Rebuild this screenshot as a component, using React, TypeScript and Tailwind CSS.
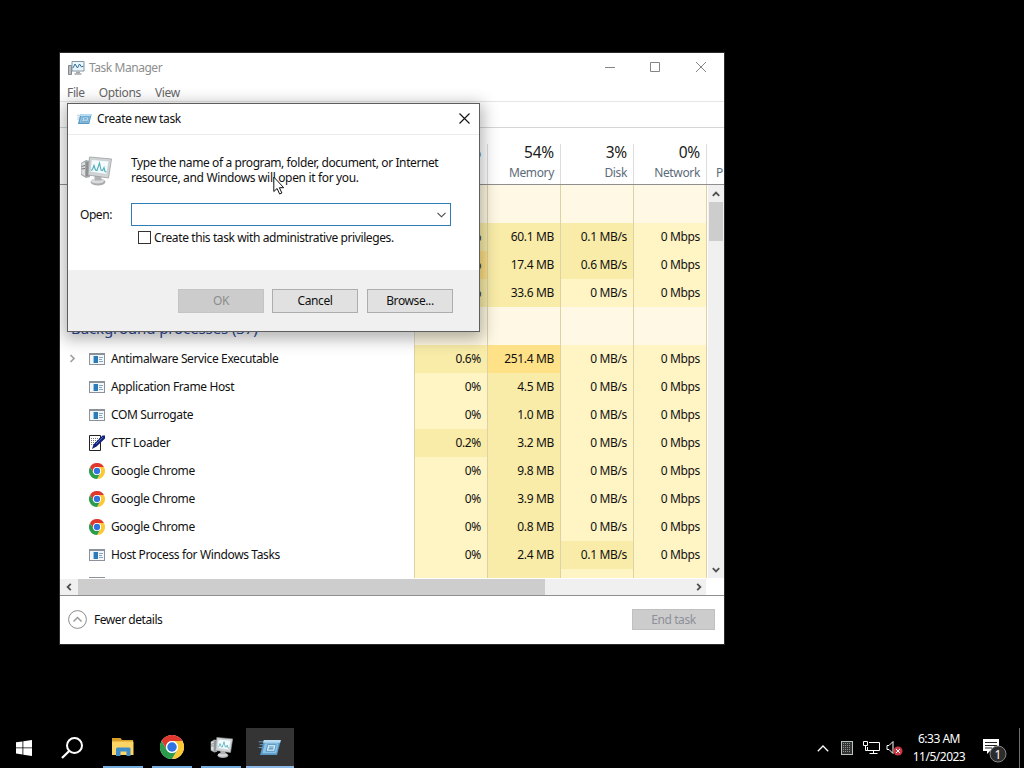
import type { ReactNode } from "react";

type Heat = "base" | "warm" | "hot" | "group";

type Row = {
  name?: string;
  icon?: "app" | "ctf" | "chrome";
  expandable?: boolean;
  cpu: [string, Heat];
  memory: [string, Heat];
  disk: [string, Heat];
};

const heatColors: Record<Heat, string> = {
  group: "bg-[#fff8e4]",
  base: "bg-[#fff4c4]",
  warm: "bg-[#f9eca8]",
  hot: "bg-[#ffe187]"
};

const apps: Row[] = [
  { cpu: ["%", "warm"], memory: ["60.1 MB", "warm"], disk: ["0.1 MB/s", "warm"] },
  { cpu: ["%", "hot"], memory: ["17.4 MB", "warm"], disk: ["0.6 MB/s", "warm"] },
  { cpu: ["%", "warm"], memory: ["33.6 MB", "warm"], disk: ["0 MB/s", "base"] }
];

const background: Row[] = [
  { name: "Antimalware Service Executable", icon: "app", expandable: true, cpu: ["0.6%", "warm"], memory: ["251.4 MB", "hot"], disk: ["0 MB/s", "base"] },
  { name: "Application Frame Host", icon: "app", cpu: ["0%", "base"], memory: ["4.5 MB", "warm"], disk: ["0 MB/s", "base"] },
  { name: "COM Surrogate", icon: "app", cpu: ["0%", "base"], memory: ["1.0 MB", "warm"], disk: ["0 MB/s", "base"] },
  { name: "CTF Loader", icon: "ctf", cpu: ["0.2%", "warm"], memory: ["3.2 MB", "warm"], disk: ["0 MB/s", "base"] },
  { name: "Google Chrome", icon: "chrome", cpu: ["0%", "base"], memory: ["9.8 MB", "warm"], disk: ["0 MB/s", "base"] },
  { name: "Google Chrome", icon: "chrome", cpu: ["0%", "base"], memory: ["3.9 MB", "warm"], disk: ["0 MB/s", "base"] },
  { name: "Google Chrome", icon: "chrome", cpu: ["0%", "base"], memory: ["0.8 MB", "warm"], disk: ["0 MB/s", "base"] },
  { name: "Host Process for Windows Tasks", icon: "app", cpu: ["0%", "base"], memory: ["2.4 MB", "warm"], disk: ["0.1 MB/s", "warm"] }
];

const columns = [
  { name: "", value: "%" },
  { name: "Memory", value: "54%" },
  { name: "Disk", value: "3%" },
  { name: "Network", value: "0%" }
];

const AppIcon = () => (
  <svg width="16" height="16" viewBox="0 0 16 16" shapeRendering="crispEdges">
    <rect x="0.5" y="2.5" width="15" height="11" fill="#f4f7f9" stroke="#8b9299" />
    <rect x="0" y="2" width="16" height="2" fill="#8b9299" />
    <rect x="5" y="5" width="4" height="7" fill="#2a7ab8" />
    <rect x="4" y="5" width="1" height="7" fill="#9cc8e6" />
    <path d="M10 6.5h4M10 8.5h3M10 10.5h4" stroke="#8aa5bd" />
  </svg>
);

const CtfIcon = () => (
  <svg width="16" height="16" viewBox="0 0 16 16">
    <path d="M.5.5h11v15H.5z" fill="#fff" stroke="#222" />
    <path d="M2 3.500h9M2 5.500h7M2 7.500h6M2 9.500h4" stroke="#777" strokeDasharray="1 1" />
    <path d="M13.500 .5h2.500v3L7.500 11.500 3 14l1.500-4.500z" fill="#12207e" />
    <path d="M14 2 7 9" stroke="#5c78c8" strokeWidth=".8" />
  </svg>
);

const ChromeIcon = ({ size = 16 }: { size?: number }) => (
  <svg width={size} height={size} viewBox="0 0 48 48">
    <circle cx="24" cy="24" r="24" fill="#fff" />
    <path d="M3.2 12A24 24 0 0 1 44.8 12H24A12 12 0 0 0 13.6 30z" fill="#e0382c" />
    <path d="M44.8 12A24 24 0 0 1 24 48L34.4 30A12 12 0 0 0 24 12z" fill="#fcc934" />
    <path d="M24 48A24 24 0 0 1 3.2 12L13.6 30A12 12 0 0 0 34.4 30z" fill="#2a9c4c" />
    <circle cx="24" cy="24" r="12" fill="#fff" />
    <circle cx="24" cy="24" r="9.5" fill="#2f74e0" />
  </svg>
);

const MonitorIcon = ({ size = 32 }: { size?: number }) => (
  <svg width={size} height={size} viewBox="0 0 32 32">
    <path d="M1 8l5-3 4 1v16l-4 1-5-3z" fill="#a4a7a9" />
    <path d="M1.500 8.500L5 7v14l-3.500-2z" fill="#dcdddd" />
    <path d="M1.500 11.500L5 10.500M1.500 14L5 13.500M7 7v14" stroke="#74787b" />
    <ellipse cx="18" cy="27" rx="7.500" ry="3.500" fill="#a9acae" />
    <ellipse cx="17.500" cy="26" rx="6.500" ry="2.500" fill="#d9dbdc" />
    <path d="M14.500 20h7v5.500h-7z" fill="#b0b3b5" />
    <path d="M9.500 2L31.500 4l-3 19L8 20z" fill="#d2d4d5" stroke="#9a9d9f" strokeWidth=".8" />
    <path d="M11.500 4.500L29 6l-2.300 13.500L10 17z" fill="#f5fbfc" stroke="#b5c6cb" strokeWidth=".6" />
    <path d="M11 15.500l1.500-1 1.500-4 1.500 4.500 1.500.5 2.500-7.500 1.500 7 1.500.500 1.500-3 1 4 1.500.5" fill="none" stroke="#4eaebc" strokeWidth="1.100" />
  </svg>
);

const SmallMonitorIcon = () => (
  <svg width="17" height="16" viewBox="0 0 17 16">
    <path d="M.5 5.500h3v9h-3z" fill="#b9bdc0" stroke="#85898c" />
    <path d="M4 1.500h12v9.500H4z" fill="#e9f6fc" stroke="#8296a6" />
    <path d="M5 8l2-4 2.500 4 2-4 2 3 2-1" fill="none" stroke="#31709c" />
    <path d="M8 11.500h4v2H8z" fill="#a5a9ac" />
    <path d="M6.500 14h7" stroke="#a5a9ac" strokeWidth="1.500" />
  </svg>
);

const RunIcon = ({ width = 15, height = 12 }: { width?: number; height?: number }) => (
  <svg width={width} height={height} viewBox="0 0 24 18">
    <path d="M0 3h9M1 6h7M0 9h6" stroke="#75a9cf" strokeWidth=".9" />
    <path d="M5.500 1H23.500L19.500 17H1.500z" fill="#5597c5" />
    <path d="M5.500 1H23.500L22.700 4H4.700z" fill="#b7dcf1" />
    <path d="M6.500 4.500h14.500L18.500 15H4z" fill="#8cc3e5" />
    <path d="M9.500 6h9l-1.700 7H8z" fill="#d9effa" stroke="#3e82b2" strokeWidth=".8" />
    <path d="M11 8.500h5M10.500 10.500h5" stroke="#4489b8" strokeWidth="1.200" />
  </svg>
);

const icons = {
  app: <AppIcon />,
  ctf: <CtfIcon />,
  chrome: <ChromeIcon />
};

const Cell = ({ children, heat }: { children?: ReactNode; heat: Heat }) => (
  <div className={`w-[73px] shrink-0 border-r border-[#ddd2a6] pr-[6px] text-right leading-[27px] tracking-[-0.35px] ${heatColors[heat]}`}>
    {children}
  </div>
);

const GroupRow = ({ title }: { title?: string }) => (
  <div className="flex h-[38px] shrink-0">
    <div className="w-[355px] shrink-0 border-r border-[#e3dcc0] pl-[11px] pt-[11px] text-[15px] leading-5 tracking-[-0.1px] text-[#264a9c]">{title}</div>
    {columns.map((_, idx) => (
      <Cell key={idx} heat="group" />
    ))}
  </div>
);

const ProcessRow = ({ row }: { row: Row }) => (
  <div className="flex h-7 shrink-0">
    <div className="flex w-[355px] shrink-0 items-center border-r border-[#ddd2a6] pl-[9px]">
      <svg width="7" height="10" viewBox="0 0 7 10" className="mr-[13px]">
        {row.expandable && <path d="M1.500 1L5 4.500 1.500 8" fill="none" stroke="#a0a0a0" strokeWidth="1.700" />}
      </svg>
      {row.icon && icons[row.icon]}
      <span className="ml-[6px] h-7 leading-[27px] tracking-[-0.37px]">{row.name}</span>
    </div>
    <Cell heat={row.cpu[1]}>{row.cpu[0]}</Cell>
    <Cell heat={row.memory[1]}>{row.memory[0]}</Cell>
    <Cell heat={row.disk[1]}>{row.disk[0]}</Cell>
    <Cell heat="base">0 Mbps</Cell>
  </div>
);

const Arrow = ({ className }: { className?: string }) => (
  <svg width="8" height="6" viewBox="0 0 8 6" className={className}>
    <path d="M.8 4.800L4 1.600l3.200 3.200" fill="none" stroke="#505050" strokeWidth="1.800" />
  </svg>
);

const TaskManager = () => (
  <div className="relative ml-[60px] mt-[53px] flex h-[591px] w-[664px] flex-col bg-white outline outline-[#2b2b2b]">
    <div className="flex h-[29px] shrink-0 items-center pl-2 text-[#8e8e8e]">
      <SmallMonitorIcon />
      <span className="ml-[4px] tracking-[-0.45px]">Task Manager</span>
      <svg width="104" height="12" viewBox="0 0 104 12" className="mb-[1px] ml-auto mr-[16px]" fill="none" stroke="#858585">
        <path d="M1 6.500h10M46.500 1.500h9v9h-9zM92 1l10 10M102 1L92 11" />
      </svg>
    </div>
    <div className="flex h-5 shrink-0 items-center gap-[14px] border-b border-[#e6e6e6] pl-[7px] pt-[2px] tracking-[-0.35px] text-[#666]">
      <span>File</span>
      <span>Options</span>
      <span>View</span>
    </div>
    <div className="h-[26px] shrink-0 border-b border-[#d5d5d5]" />

    <div className="flex h-[57px] shrink-0 overflow-hidden border-b border-[#8f8f8f] pt-4">
      <div className="w-[355px] shrink-0 border-r border-[#dcdcdc]" />
      {columns.map((col, idx) => (
        <div key={idx} className="w-[73px] shrink-0 border-r border-[#dcdcdc] pr-[6px] text-right">
          <div className="-mt-[1px] text-[15.5px] leading-[18px] tracking-[-0.2px] text-[#1a1a1a]">{col.value}</div>
          <div className="mt-[3px] leading-[18px] tracking-[-0.35px] text-[#5c6b78]">{col.name}</div>
        </div>
      ))}
      <div className="pl-[9px] pt-5 leading-[18px] text-[#5c6b78]">P</div>
    </div>

    <div className="flex h-[393px] shrink-0">
      <div className="flex w-[647px] shrink-0 flex-col overflow-hidden">
        <GroupRow />
        {apps.map((row, idx) => (
          <ProcessRow key={idx} row={row} />
        ))}
        <GroupRow title="Background processes (37)" />
        {background.map((row, idx) => (
          <ProcessRow key={idx} row={row} />
        ))}
        <div className="flex h-7 shrink-0">
          <div className="w-[355px] shrink-0 border-r border-[#ddd2a6] pl-[29px] pt-2">
            <div className="h-px w-4 bg-[#8b9299]" />
          </div>
          <Cell heat="base" />
          <Cell heat="warm" />
          <Cell heat="base" />
          <Cell heat="base" />
        </div>
      </div>
      <div className="ml-[1px] flex w-4 flex-col items-center bg-[#f0f0f0]">
        <div className="flex h-[17px] items-center"><Arrow /></div>
        <div className="h-[39px] w-[14px] bg-[#cdcdcd]" />
        <div className="mt-auto flex h-4 items-center"><Arrow className="rotate-180" /></div>
      </div>
    </div>
    <div className="flex h-[18px] shrink-0 border-b border-[#8f8f8f] pt-[1px]">
      <div className="flex w-[646px] items-center bg-[#f0f0f0]">
        <div className="flex w-[18px] justify-center"><Arrow className="-rotate-90" /></div>
        <div className="h-full w-[467px] bg-[#cdcdcd]" />
        <div className="ml-auto mr-[3px]"><Arrow className="rotate-90" /></div>
      </div>
    </div>
    <div className="flex flex-1 items-center pb-[1px] pl-2 pr-[9px]">
      <svg width="19" height="19" viewBox="0 0 19 19" fill="none">
        <circle cx="9.500" cy="9.500" r="8.900" stroke="#8a8a8a" />
        <path d="M5.500 11.500l4-4 4 4" stroke="#9a9a9a" strokeWidth="1.500" />
      </svg>
      <span className="ml-[7px] tracking-[-0.45px]">Fewer details</span>
      <div className="ml-auto h-[21px] w-[83px] border border-[#c0c0c0] bg-[#cccccc] text-center leading-[20px] tracking-[-0.4px] text-[#8c9098]">End task</div>
    </div>
    <CreateTaskDialog />
  </div>
);

const CreateTaskDialog = () => (
  <div className="absolute left-[7px] top-[50px] flex h-[229px] w-[413px] flex-col border border-[#5e5e5e] bg-white shadow-[0_4px_15px_3px_rgba(0,0,0,0.3)]">
    <div className="flex h-[31px] shrink-0 items-center border-b border-[#ececec] pl-[9px] pr-[9px]">
      <RunIcon />
      <span className="ml-[5px] tracking-[-0.4px]">Create new task</span>
      <svg width="11" height="11" viewBox="0 0 11 11" className="mb-[1px] ml-auto">
        <path d="M.5.5l10 10M10.500.5l-10 10" stroke="#111" strokeWidth="1.100" />
      </svg>
    </div>
    <div className="flex h-[68px] shrink-0 pl-3 pt-[20px]">
      <MonitorIcon />
      <p className="ml-[19px] whitespace-nowrap leading-[15px]">
        <span className="tracking-[-0.4px]">Type the name of a program, folder, document, or Internet</span>
        <br />
        <span className="tracking-[-0.34px]">resource, and Windows will open it for you.</span>
      </p>
    </div>
    <div className="flex h-[23px] shrink-0 items-center pl-3">
      <span className="w-[51px] tracking-[-0.45px]">Open:</span>
      <div className="flex h-[23px] w-[320px] items-center justify-end border border-[#2f7eb5] bg-white pr-1">
        <svg width="9" height="6" viewBox="0 0 9 6">
          <path d="M.5.8l4 4 4-4" fill="none" stroke="#444" strokeWidth="1.100" />
        </svg>
      </div>
    </div>
    <div className="mt-[4px] flex h-[15px] items-center pl-[70px]">
      <div className="h-[13px] w-[13px] border border-[#333]" />
      <span className="ml-[3px] tracking-[-0.4px]">Create this task with administrative privileges.</span>
    </div>
    <div className="mt-auto flex h-[61px] shrink-0 items-start justify-end bg-[#f0f0f0] pr-[26px] pt-[19px] text-center leading-[21px] tracking-[-0.4px]">
      <div className="h-6 w-[86px] border border-[#c4c4c4] bg-[#cccccc] text-[#8c8c8c]">OK</div>
      <div className="ml-2 h-6 w-[86px] border border-[#adadad] bg-[#e1e1e1]">Cancel</div>
      <div className="ml-[9px] h-6 w-[86px] border border-[#adadad] bg-[#e1e1e1]">Browse...</div>
    </div>
    <svg width="12" height="19" viewBox="0 0 12 19" className="absolute left-[205px] top-[72px]">
      <path d="M.8 1v14.500l3.300-3 2.500 5.500 2.300-1-2.500-5.300h4.300z" fill="#fff" stroke="#111" />
    </svg>
  </div>
);

const TaskButton = ({ children }: { children: ReactNode }) => (
  <div className="flex h-10 w-10 items-center justify-center border-b-2 border-[#76aee0]">{children}</div>
);

const Taskbar = () => (
  <div className="mt-auto flex h-10 items-center text-white">
    <div className="flex w-12 justify-center">
      <svg width="16" height="16" viewBox="0 0 16 16" fill="#fff">
        <path d="M0 2.300l6.500-.9v6.100H0zM7.300 1.300L16 0v7.500H7.300zM0 8.300h6.500v6.200L0 13.600zM7.300 8.300H16V16l-8.700-1.300z" />
      </svg>
    </div>
    <div className="flex w-12 justify-center">
      <svg width="22" height="22" viewBox="0 0 22 22" fill="none" stroke="#fff" strokeWidth="2">
        <circle cx="13.500" cy="8.500" r="7.500" />
        <path d="M8.200 14L1 21" strokeWidth="2.300" />
      </svg>
    </div>
    <div className="ml-[7px] flex gap-[9px]">
      <TaskButton>
        <svg width="22" height="18" viewBox="0 0 22 18">
          <path d="M0 0h8.500L10 2h11v4H0z" fill="#d99f2b" />
          <path d="M0 3.500h21.500V17H0z" fill="#fbd465" />
          <path d="M4 18v-7.500L5.500 9.500h12l1 1V18h-4v-4.500h-6V18z" fill="#3e8cc8" />
        </svg>
      </TaskButton>
      <TaskButton><ChromeIcon size={24} /></TaskButton>
      <TaskButton><MonitorIcon size={23} /></TaskButton>
    </div>
    <div className="ml-[5px] flex h-10 w-12 items-center justify-center border-b-2 border-[#8db9e6] bg-[#343434]">
      <RunIcon width={24} height={17} />
    </div>

    <div className="ml-auto flex h-10 items-center">
      <svg width="12" height="7" viewBox="0 0 12 7" fill="none" stroke="#fff" strokeWidth="1.300">
        <path d="M.8 6.200L6 1l5.200 5.200" />
      </svg>
      <svg width="12" height="14" viewBox="0 0 12 14" className="ml-3" shapeRendering="crispEdges">
        <rect x=".5" y=".5" width="11" height="13" fill="#333" stroke="#b9c4c0" />
        <path d="M2 2.500h8M2 4.500h8M2 6.500h8M2 8.500h8M2 10.500h8" stroke="#8a9490" strokeDasharray="1 1" />
      </svg>
      <svg width="17" height="14" viewBox="0 0 17 14" className="ml-[10px]" fill="none" stroke="#fff">
        <path d="M6 1.500h10.500v8H4.500V6M10.500 9.500v3M6.500 12.500h8M.5.5h4v4h-4zM2.500 4.500v5h2" />
      </svg>
      <svg width="17" height="16" viewBox="0 0 17 16" className="ml-[6px]">
        <path d="M1 5.500h2l4-4v12l-4-4H1z" fill="none" stroke="#fff" />
        <circle cx="12" cy="11" r="4.500" fill="#cc3945" />
        <path d="M10 9l4 4M14 9l-4 4" stroke="#fff" />
      </svg>
      <div className="ml-[7px] flex w-[58px] flex-col items-center whitespace-nowrap leading-[18px] tracking-[-0.5px]">
        <span>6:33 AM</span>
        <span>11/5/2023</span>
      </div>
      <svg width="26" height="26" viewBox="0 0 26 26" className="ml-[14px] mt-1">
        <path d="M1 2h16v12H8l-3 3v-3H1z" fill="#fff" />
        <path d="M3 5.500h12M3 8.500h12M3 11h7" stroke="#222" />
        <circle cx="16" cy="17" r="8" fill="#2c2c2c" stroke="#858585" />
        <text x="16" y="21.500" textAnchor="middle" fontSize="12" fill="#fff">1</text>
      </svg>
      <div className="ml-[11px] h-10 w-[5px] border-l border-[#707070]" />
    </div>
  </div>
);

export default function App() {
  return (
    <div className="flex h-[768px] w-[1024px] flex-col overflow-hidden bg-black font-['Noto_Sans','Open_Sans',sans-serif] text-[12px] leading-[16px] text-[#111]">
      <TaskManager />
      <Taskbar />
    </div>
  );
}
